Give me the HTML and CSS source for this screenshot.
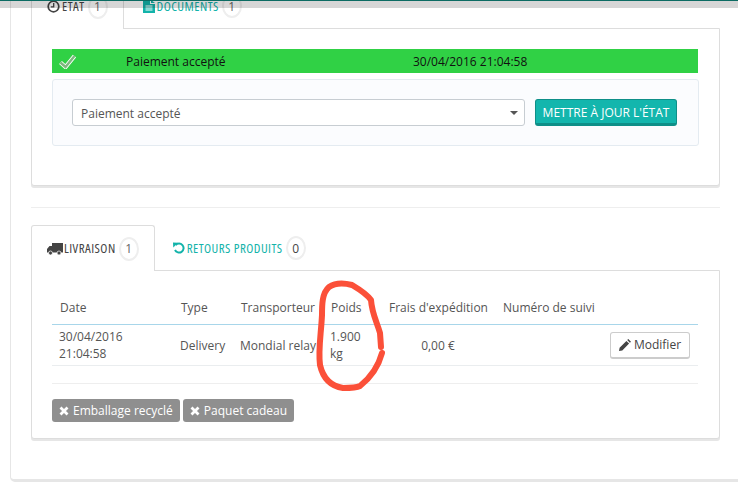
FILE: index.html
```html
<!DOCTYPE html>
<html lang="fr">
<head>
<meta charset="utf-8">
<title>Commande</title>
<link rel="stylesheet" href="styles.css">
</head>
<body>
<div class="topbar"></div>
<div class="page">
  <div class="outer">
    <div class="tabs">
      <div class="tab active">
        <svg class="ico" width="13" height="13" viewBox="0 0 13 13"><circle cx="6.5" cy="6.5" r="5.3" fill="none" stroke="#444" stroke-width="1.7"/><path d="M6.7 3v3.900H3.800" fill="none" stroke="#444" stroke-width="1.3"/></svg>
        <span class="tab-label">ÉTAT</span><span class="badge">1</span>
      </div>
      <div class="tab link">
        <svg class="ico" width="12" height="13" viewBox="0 0 12 13"><path d="M0 0h7v4h5v9H0z" fill="#13b3aa"/><path d="M8 0l4 3H8z" fill="#13b3aa"/><path d="M2.500 6h7M2.500 8h7M2.500 10h7" stroke="#fff" stroke-width="1"/></svg>
        <span class="tab-label">DOCUMENTS</span><span class="badge">1</span>
      </div>
    </div>
    <div class="panel first">
      <div class="status">
        <svg width="17" height="15" viewBox="0 0 17 15"><path d="M1.500 8.500l5 4.500 9-11" fill="none" stroke="#fff" stroke-width="4.200"/><path d="M1.500 8.500l5 4.500 9-11" fill="none" stroke="#7fb77f" stroke-width="2.400"/></svg>
        <span>Paiement accepté</span>
        <span>30/04/2016 21:04:58</span>
      </div>
      <div class="well">
        <div class="select"><span class="select-text">Paiement accepté</span><i class="caret"></i></div>
        <div class="update">METTRE À JOUR L'ÉTAT</div>
      </div>
    </div>
    <div class="rule"></div>
    <div class="tabs second">
      <div class="tab active boxed">
        <svg class="ico truck" width="16" height="12" viewBox="0 0 16 12"><path d="M5 0h11v9.500H5zM0 9.500V6l2.500-3H5v6.500z" fill="#444"/><circle cx="3.500" cy="10" r="2" fill="#444" stroke="#fff" stroke-width=".7"/><circle cx="12" cy="10" r="2" fill="#444" stroke="#fff" stroke-width=".7"/></svg>
        <span class="tab-label">LIVRAISON</span><span class="badge">1</span>
      </div>
      <div class="tab link">
        <svg class="ico" width="12" height="12" viewBox="0 0 12 12"><path d="M2.600 3.200A4.500 4.500 0 1 1 2 8" fill="none" stroke="#13b3aa" stroke-width="2"/><path d="M0 .5l5 .3-4.700 4.700z" fill="#13b3aa"/></svg>
        <span class="tab-label">RETOURS PRODUITS</span><span class="badge dark">0</span>
      </div>
    </div>
    <div class="panel last">
      <table class="ship">
        <colgroup><col class="c1"><col class="c2"><col class="c3"><col class="c4"><col class="c5"><col class="c6"><col></colgroup>
        <thead>
          <tr><th>Date</th><th>Type</th><th>Transporteur</th><th>Poids</th><th>Frais d'expédition</th><th>Numéro de suivi</th><th></th></tr>
        </thead>
        <tbody>
          <tr>
            <td>30/04/2016<br>21:04:58</td>
            <td>Delivery</td>
            <td>Mondial relay</td>
            <td>1.900<br>kg</td>
            <td class="center">0,00 €</td>
            <td></td>
            <td class="right"><span class="modify"><svg width="12" height="12" viewBox="0 0 12 12"><path d="M0 12l.6-3.300L7.400 1.900l2.700 2.700L3.300 11.400zM8.200 1.100L9.300 0 12 2.700l-1.100 1.100z" fill="#444"/></svg>Modifier</span></td>
          </tr>
        </tbody>
      </table>
      <div class="subrule"></div>
      <div class="labels">
        <span class="tag"><svg width="10" height="10" viewBox="0 0 10 10"><path d="M1.500 1.500l7 7M8.500 1.500l-7 7" stroke="#fff" stroke-width="2.800"/></svg>Emballage recyclé</span>
        <span class="tag"><svg width="10" height="10" viewBox="0 0 10 10"><path d="M1.500 1.500l7 7M8.500 1.500l-7 7" stroke="#fff" stroke-width="2.800"/></svg>Paquet cadeau</span>
      </div>
    </div>
  </div>
</div>
<svg class="scribble" width="738" height="487" viewBox="0 0 738 487"><path d="M381 347L380 333C377 322 372 314 371 300C366 293 357 288 352 285C344 283 335 283 329 287C322 293 322 305 322 315C321 335 318 350 320 365C323 378 330 386 343 388C350 388 356 388 360 386C370 378 378 368 382 353" fill="none" stroke="#fb5039" stroke-width="6" stroke-linecap="round" stroke-linejoin="round"/></svg>
</body>
</html>
```
FILE: styles.css
```css
html, body {
  margin: 0;
  padding: 0;
  height: 487px;
  overflow: hidden;
  background: #fff;
}
body {
  font-family: "Open Sans", sans-serif;
  font-size: 12px;
  line-height: 17px;
  color: #555;
  position: relative;
}
.topbar {
  position: absolute;
  top: 0;
  left: 0;
  right: 0;
  height: 7px;
  background: rgba(0, 0, 0, .16);
  border-top: 1px solid #0b6b62;
  z-index: 3;
}
.scribble {
  position: absolute;
  top: 0;
  left: 0;
  z-index: 4;
}
.page {
  margin-top: -18px;
  padding-left: 10px;
  width: 760px;
}
.outer {
  border: 1px solid #e6e6e6;
  border-bottom-width: 3px;
  border-radius: 5px;
  padding: 0 20px;
  height: 496px;
}
.tabs {
  display: flex;
  height: 45px;
  position: relative;
  z-index: 1;
}
.second {
  margin-top: 17px;
}
.tab {
  display: flex;
  align-items: center;
  padding: 0 15px;
  border: 1px solid transparent;
  border-bottom: 0;
  margin-right: 3px;
  box-sizing: border-box;
  height: 45px;
}
.tab.active {
  background: #fff;
  border-color: #ddd;
  border-radius: 3px 3px 0 0;
  height: 46px;
  color: #444;
}
.tab.boxed {
  margin-right: 2px;
}
.tab.link {
  color: #13b3aa;
}
.ico {
  margin-right: 2px;
  flex: none;
}
.ico.truck {
  margin-right: 1px;
}
.tab-label {
  display: inline-block;
  font-size: 13px;
  font-stretch: condensed;
  font-weight: 500;
  letter-spacing: .45px;
}
.badge {
  width: 20px;
  height: 24px;
  margin-left: 3px;
  border: 2px solid #eee;
  border-radius: 50%;
  box-sizing: border-box;
  display: flex;
  align-items: center;
  justify-content: center;
  font-size: 12px;
  color: #666;
}
.badge.dark {
  color: #444;
}
.panel {
  width: 689px;
  box-sizing: border-box;
  border: 1px solid #ddd;
  border-radius: 0 0 3px 3px;
  box-shadow: 0 2px 0 #e6e6e6;
  padding: 20px;
  background: #fff;
}
.first {
  height: 158px;
}
.last {
  height: 169px;
  padding-top: 20px;
}
.rule {
  width: 689px;
  height: 1px;
  background: #eee;
  margin-top: 21px;
}
.status {
  display: grid;
  grid-template-columns: 74px 287px 1fr;
  align-items: center;
  height: 24px;
  width: 646px;
  background: #30d145;
  color: #111;
  box-sizing: border-box;
}
.status svg {
  margin-left: 7px;
}
.well {
  display: flex;
  align-items: flex-start;
  gap: 10px;
  width: 647px;
  height: 67px;
  margin-top: 6px;
  box-sizing: border-box;
  padding: 19px;
  background: #fbfcfe;
  border: 1px solid #e4ebf1;
  border-radius: 3px;
}
.select {
  width: 453px;
  height: 27px;
  box-sizing: border-box;
  border: 1px solid #c7cdd2;
  border-radius: 3px;
  background: #fff;
  padding-left: 8px;
  display: flex;
  align-items: center;
  justify-content: space-between;
}
.select-text {
  padding-top: 2px;
}
.caret {
  width: 0;
  height: 0;
  margin-right: 6px;
  border: 4px solid transparent;
  border-top: 4px solid #555;
  border-bottom: 0;
}
.update {
  width: 142px;
  height: 27px;
  box-sizing: border-box;
  background: #13b6ad;
  border: 1px solid #0e8f88;
  border-bottom-width: 3px;
  border-radius: 3px;
  color: #fff;
  font-weight: 500;
  text-align: center;
  line-height: 25px;
  white-space: nowrap;
}
.ship {
  width: 646px;
  border-collapse: collapse;
  table-layout: fixed;
}
.c1 { width: 121px; }
.c2 { width: 60px; }
.c3 { width: 90px; }
.c4 { width: 58px; }
.c5 { width: 114px; }
.c6 { width: 100px; }
.ship th {
  font-weight: 400;
  text-align: left;
  padding: 8px 0 8px 8px;
  height: 32px;
  box-sizing: border-box;
  border-bottom: 1px solid #a8d6ea;
  white-space: nowrap;
}
.ship td {
  padding: 0 0 0 7px;
  height: 41px;
  box-sizing: border-box;
  border-bottom: 1px solid #eaedef;
  white-space: nowrap;
}
.ship td.center {
  text-align: center;
  padding: 0;
}
.ship td.right {
  text-align: right;
  padding: 0 8px 0 0;
}
.modify {
  display: inline-flex;
  align-items: center;
  justify-content: center;
  gap: 3px;
  width: 80px;
  height: 27px;
  box-sizing: border-box;
  border: 1px solid #ccc;
  border-bottom-width: 2px;
  border-radius: 3px;
  color: #444;
  background: #fff;
}
.subrule {
  height: 1px;
  width: 646px;
  background: #eee;
  margin-top: 17px;
}
.labels {
  display: flex;
  gap: 3px;
  margin-top: 15px;
}
.tag {
  display: inline-flex;
  align-items: center;
  gap: 4px;
  height: 23px;
  padding: 0 7px;
  background: #8f8f8f;
  border-radius: 3px;
  color: #fff;
}
```
